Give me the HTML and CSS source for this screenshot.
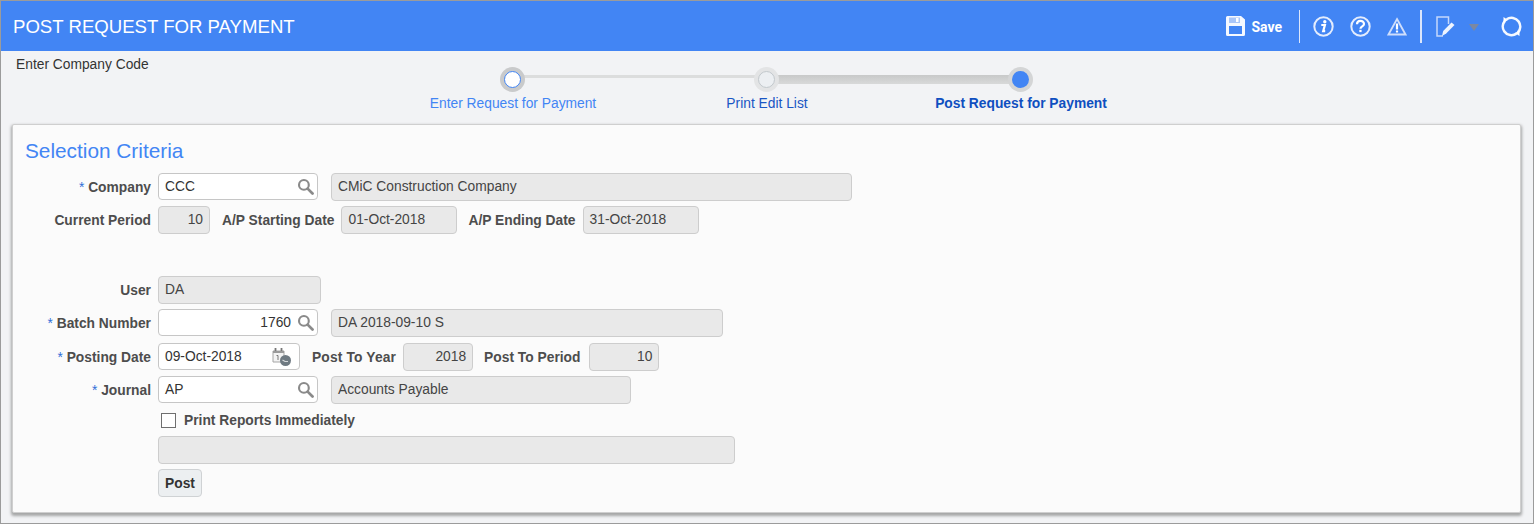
FILE: index.html
```html
<!DOCTYPE html>
<html lang="en">
<head>
<meta charset="utf-8">
<title>Post Request for Payment</title>
<link rel="stylesheet" href="styles.css">
</head>
<body>
<svg class="defs" width="0" height="0" aria-hidden="true">
  <symbol id="mag" viewBox="0 0 16 16">
    <circle cx="6.500" cy="6.500" r="4.600" fill="none" stroke="#8a8a8a" stroke-width="2"/>
    <path d="M10 10l4.600 4.600" stroke="#8a8a8a" stroke-width="2.600" stroke-linecap="round"/>
  </symbol>
</svg>
<div class="app">
  <header class="bar">
    <h1 class="title">POST REQUEST FOR PAYMENT</h1>
    <div class="tools">
      <svg class="ic-save" width="19" height="20" viewBox="0 0 19 20">
        <path d="M1.500 0h13.500l4 3.500v15a1.500 1.500 0 0 1-1.500 1.500h-16a1.500 1.500 0 0 1-1.500-1.500v-17a1.500 1.500 0 0 1 1.500-1.500z" fill="#f4f8ff"/>
        <rect x="3" y="1.500" width="11" height="5.500" fill="#a9c6f9"/>
        <rect x="10" y="2" width="2.500" height="4" fill="#fff"/>
        <rect x="3" y="10" width="13" height="8" fill="#4285f4"/>
      </svg>
      <span class="save">Save</span>
      <span class="sep sep-a"></span>
      <svg class="ic ic-info" width="21" height="21" viewBox="0 0 21 21">
        <circle cx="10.500" cy="10.500" r="9.200" fill="none" stroke="#e3ecfd" stroke-width="2"/>
        <circle cx="11.800" cy="5.800" r="1.700" fill="#fff"/>
        <path d="M8.300 9h3.600l-1.700 6.200h2" fill="none" stroke="#fff" stroke-width="2.200"/>
      </svg>
      <svg class="ic ic-help" width="21" height="21" viewBox="0 0 21 21">
        <circle cx="10.500" cy="10.500" r="9.200" fill="none" stroke="#e3ecfd" stroke-width="2"/>
        <path d="M7 8.200c0-4.400 7-4.400 7-.2 0 2.500-3.500 2.300-3.500 4.700" fill="none" stroke="#fff" stroke-width="2.200"/>
        <rect x="9.300" y="13.800" width="2.300" height="2.300" fill="#fff"/>
      </svg>
      <svg class="ic ic-warn" width="20" height="19" viewBox="0 0 20 19">
        <path d="M10 2l8.500 15.500h-17z" fill="none" stroke="#cfdefb" stroke-width="1.800"/>
        <rect x="8.900" y="6.500" width="2.200" height="6" fill="#fff"/>
        <rect x="8.900" y="13.500" width="2.200" height="2" fill="#fff"/>
      </svg>
      <span class="sep sep-b"></span>
      <svg class="ic ic-edit" width="20" height="21" viewBox="0 0 20 21">
        <path d="M12.500 8V1H1v19h6" fill="none" stroke="#c5d8fb" stroke-width="1.500"/>
        <path d="M6 20l1.200-5 8.300-8.500 3 2.500-8.300 8.500z" fill="#eef4fe"/>
      </svg>
      <span class="caret"></span>
      <svg class="ic ic-sync" width="21" height="21" viewBox="0 0 21 21">
        <circle cx="10.500" cy="10.500" r="8.700" fill="none" stroke="#f4f8ff" stroke-width="2.600" stroke-dasharray="25 2.330" transform="rotate(55 10.500 10.500)"/>
        <path d="M2.500 1l4.500 3-4.500 3zM18.500 20l-4.500-3 4.500-3z" fill="#fff"/>
      </svg>
    </div>
  </header>

  <section class="train">
    <div class="crumb">Enter Company Code</div>
    <div class="steps">
      <div class="step step-one">
        <span class="node node-one"><i></i></span>
        <span class="step-label label-one">Enter Request for Payment</span>
      </div>
      <span class="link link-thin"></span>
      <div class="step step-two">
        <span class="node node-two"><i></i></span>
        <span class="step-label label-two">Print Edit List</span>
      </div>
      <span class="link link-thick"></span>
      <div class="step step-three">
        <span class="node node-three"><i></i></span>
        <span class="step-label label-three">Post Request for Payment</span>
      </div>
    </div>
  </section>

  <main class="panel">
    <h2 class="heading">Selection Criteria</h2>

    <div class="row r-company">
      <label class="lab"><span class="req">*</span> Company</label>
      <div class="in w-160"><span>CCC</span><svg class="mag"><use href="#mag"/></svg></div>
      <div class="ro w-521 gap13">CMiC Construction Company</div>
    </div>
    <div class="row r-period">
      <label class="lab">Current Period</label>
      <div class="ro w-52 num">10</div>
      <label class="lab2 l-start">A/P Starting Date</label>
      <div class="ro w-116">01-Oct-2018</div>
      <label class="lab2 l-end">A/P Ending Date</label>
      <div class="ro w-116">31-Oct-2018</div>
    </div>
    <div class="row r-user">
      <label class="lab">User</label>
      <div class="ro w-163">DA</div>
    </div>
    <div class="row r-batch">
      <label class="lab"><span class="req">*</span> Batch Number</label>
      <div class="in w-160 num-in"><span>1760</span><svg class="mag"><use href="#mag"/></svg></div>
      <div class="ro w-392 gap13">DA 2018-09-10 S</div>
    </div>
    <div class="row r-post">
      <label class="lab"><span class="req">*</span> Posting Date</label>
      <div class="in w-142"><span>09-Oct-2018</span>
        <svg class="cal" width="20" height="18" viewBox="0 0 20 18">
          <path d="M1 3h11v11H1z" fill="#f3f3f3" stroke="#a5a5a5"/>
          <path d="M3.500 0v4M9.500 0v4" stroke="#777" stroke-width="1.800"/>
          <path d="M1 3h11v2H1z" fill="#9a9a9a"/>
          <path d="M4.500 7.500h1.500v4.500" fill="none" stroke="#777"/>
          <circle cx="13.500" cy="12.500" r="5.500" fill="#6f7a82"/>
          <path d="M10.500 12l2.500 1.500h3" fill="none" stroke="#d5d8da" stroke-width="1.200"/>
        </svg>
      </div>
      <label class="lab2 l-year">Post To Year</label>
      <div class="ro w-70 num">2018</div>
      <label class="lab2 l-period">Post To Period</label>
      <div class="ro w-70 num">10</div>
    </div>
    <div class="row r-journal">
      <label class="lab"><span class="req">*</span> Journal</label>
      <div class="in w-160"><span>AP</span><svg class="mag"><use href="#mag"/></svg></div>
      <div class="ro w-300 gap13">Accounts Payable</div>
    </div>
    <div class="row r-check">
      <span class="box"></span>
      <label class="check-label">Print Reports Immediately</label>
    </div>
    <div class="row r-empty">
      <div class="ro w-577"></div>
    </div>
    <div class="row r-btn">
      <button class="btn" type="button">Post</button>
    </div>
  </main>
</div>
</body>
</html>
```
FILE: styles.css
```css
html, body {
  margin: 0;
  padding: 0;
}
body {
  width: 1534px;
  height: 524px;
  overflow: hidden;
  font-family: "Liberation Sans", Arial, sans-serif;
  font-size: 13.8px;
  color: #333;
}
.defs {
  position: absolute;
}
.app {
  box-sizing: border-box;
  width: 1534px;
  height: 524px;
  border: 1px solid #9b9b9b;
  background: #f2f3f5;
}
.bar {
  height: 50px;
  background: #4285f4;
  display: flex;
  align-items: center;
  justify-content: space-between;
}
.title {
  margin: 1px 0 0 12px;
  font-size: 18.6px;
  font-weight: 400;
  color: #fff;
}
.tools {
  display: flex;
  align-items: center;
  height: 50px;
}
.ic-save {
  margin-right: 6px;
}
.save {
  font-family: Roboto, "Liberation Sans", sans-serif;
  font-weight: 700;
  font-size: 14px;
  color: #fff;
  margin-top: 1px;
}
.sep {
  display: block;
  background: #dbe6fb;
}
.sep-a {
  width: 1px;
  height: 33px;
  margin: 0 13px 0 17px;
}
.sep-b {
  width: 2px;
  height: 33px;
  margin: 0 14px 0 14px;
}
.ic-help {
  margin-left: 16px;
}
.ic-warn {
  margin-left: 16px;
  margin-right: -1px;
}
.caret {
  width: 0;
  height: 0;
  border-left: 5px solid transparent;
  border-right: 5px solid transparent;
  border-top: 7px solid #7b88a2;
  margin: 3px 0 0 13px;
}
.ic-sync {
  margin: 0 11px 0 22px;
}
.train {
  position: relative;
  height: 73px;
}
.crumb {
  padding: 6px 0 0 15px;
  line-height: 16px;
}
.steps {
  position: absolute;
  left: 0;
  top: 0;
  width: 100%;
  height: 73px;
}
.step-label {
  position: absolute;
  top: 44px;
  line-height: 18px;
  white-space: nowrap;
  transform: translateX(-50%);
}
.label-one {
  left: 512px;
  color: #4285f4;
}
.label-two {
  left: 766px;
  color: #1a56c4;
}
.label-three {
  left: 1020px;
  color: #0f4fc0;
  font-weight: 700;
}
.node {
  position: absolute;
  top: 16px;
  width: 25px;
  height: 25px;
  border-radius: 50%;
  background: #d4d5d6;
  display: flex;
  align-items: center;
  justify-content: center;
  z-index: 1;
}
.node i {
  display: block;
  box-sizing: border-box;
  width: 17px;
  height: 17px;
  border-radius: 50%;
}
.node-one {
  left: 499px;
  background: #c9cacb;
}
.node-one i {
  background: #fff;
  border: 1.500px solid #4285f4;
}
.node-two {
  left: 753px;
  background: #e3e4e5;
}
.node-two i {
  background: #eceff2;
  border: 1px solid #c2c8cc;
}
.node-three {
  left: 1007px;
  background: #d4d5d6;
}
.node-three i {
  background: #4285f4;
}
.link {
  position: absolute;
  display: block;
}
.link-thin {
  left: 520px;
  width: 240px;
  top: 24px;
  height: 3px;
  background: #dcdddd;
}
.link-thick {
  left: 775px;
  width: 240px;
  top: 24px;
  height: 9px;
  background: linear-gradient(#c8c9c9, #d8d9d9);
}
.panel {
  box-sizing: border-box;
  margin-left: 11px;
  width: 1509px;
  height: 389px;
  background: #fbfbfb;
  border: 1px solid #cfcfcf;
  border-radius: 2px;
  box-shadow: 0 2px 3px 1px #a5a6a6;
  padding: 14px 0 0 0;
}
.heading {
  margin: 0 0 10px 12px;
  font-size: 20.8px;
  font-weight: 400;
  line-height: 24px;
  color: #4285f4;
}
.row {
  display: flex;
  align-items: center;
  min-height: 28px;
}
.lab {
  box-sizing: border-box;
  width: 138px;
  text-align: right;
  font-weight: 700;
  color: #4d4d4d;
  margin-right: 7px;
  white-space: nowrap;
}
.lab2 {
  font-weight: 700;
  color: #4d4d4d;
  white-space: nowrap;
}
.req {
  color: #2f6fd8;
  font-weight: 400;
}
.in, .ro {
  box-sizing: border-box;
  border-radius: 4px;
  padding: 0 6px;
  display: flex;
  align-items: center;
  line-height: 16px;
  white-space: nowrap;
  flex: none;
}
.in {
  height: 27px;
  align-self: flex-start;
  background: #fff;
  border: 1px solid #c6c6c6;
  position: relative;
  color: #333;
}
.ro {
  height: 28px;
  background: #e9e9e9;
  border: 1px solid #cdcdcd;
  color: #444;
}
.num {
  justify-content: flex-end;
}
.num-in span {
  width: 126px;
  text-align: right;
}
.mag {
  position: absolute;
  right: 3px;
  top: 4px;
  width: 17px;
  height: 17px;
}
.cal {
  position: absolute;
  right: 7px;
  top: 4px;
}
.gap13 { margin-left: 13px; }
.w-52 { width: 52px; }
.w-70 { width: 70px; }
.w-116 { width: 116px; }
.w-142 { width: 142px; }
.w-160 { width: 160px; }
.w-163 { width: 163px; }
.w-300 { width: 300px; }
.w-392 { width: 392px; }
.w-521 { width: 521px; }
.w-577 { width: 577px; }
.r-period { margin-top: 5px; }
.r-user { margin-top: 42px; }
.r-batch { margin-top: 5px; }
.r-post { margin-top: 6px; }
.r-journal { margin-top: 5px; }
.r-check {
  margin-top: 7px;
  padding-left: 148px;
  min-height: 18px;
}
.r-empty { margin-top: 7px; padding-left: 145px; }
.r-btn { margin-top: 5px; padding-left: 145px; }
.l-start { margin: 0 7px 0 12px; }
.l-end { margin: 0 7px 0 11px; }
.l-year { margin: 0 7px 0 12px; letter-spacing: 0.15px; }
.l-period { margin: 0 9px 0 11px; }
.box {
  box-sizing: border-box;
  width: 15px;
  height: 15px;
  background: #fff;
  border: 1px solid #6f6f6f;
  margin-right: 8px;
}
.check-label {
  font-weight: 700;
  color: #4d4d4d;
}
.btn {
  box-sizing: border-box;
  width: 44px;
  height: 28px;
  padding: 0;
  background: #eceff1;
  border: 1px solid #cfd2d4;
  border-radius: 4px;
  font-family: "Liberation Sans", Arial, sans-serif;
  font-size: 13.8px;
  font-weight: 700;
  color: #333;
}
```
